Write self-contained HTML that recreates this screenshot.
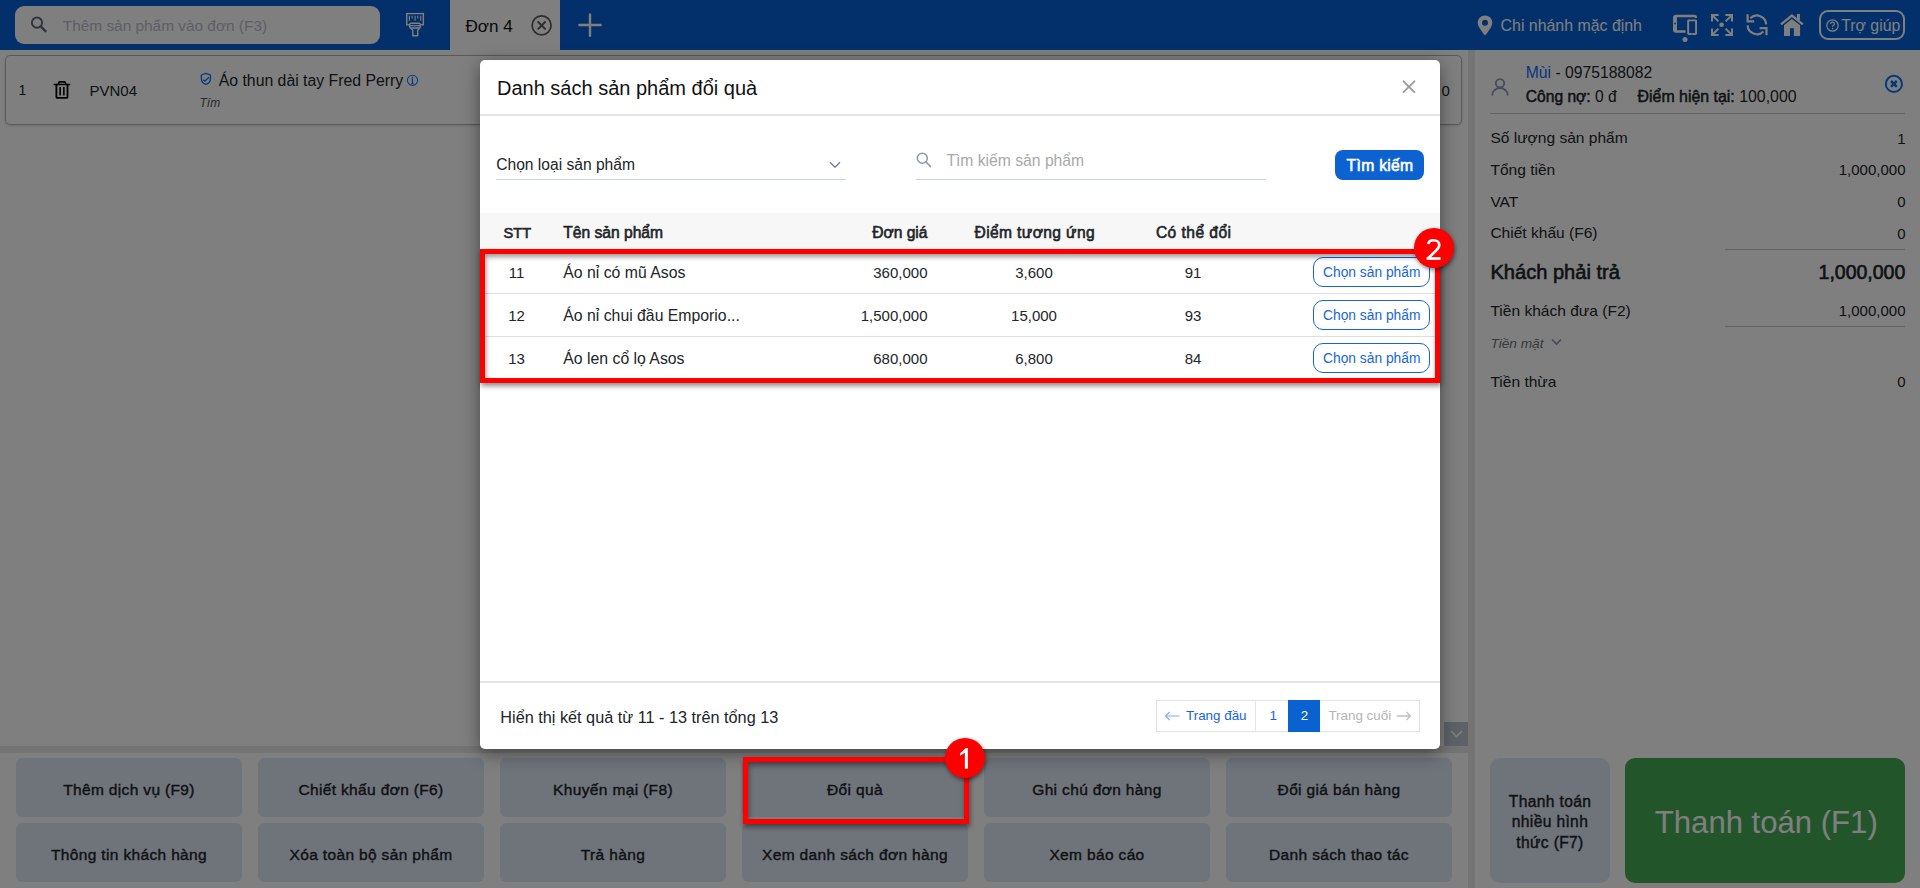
<!DOCTYPE html>
<html><head><meta charset="utf-8">
<style>
*{box-sizing:border-box;margin:0;padding:0}
html,body{width:1920px;height:888px;overflow:hidden;background:#fff;font-family:"Liberation Sans",sans-serif;color:#212529;position:relative}
.abs{position:absolute}
.t{position:absolute;line-height:1;white-space:nowrap}
.box{position:absolute}
.btn{position:absolute;width:226px;height:59px;background:#dfe7f5;border-radius:6px}
.overlay{position:absolute;left:0;top:0;width:1920px;height:888px;background:rgba(0,0,0,.5)}
.modal{position:absolute;left:480px;top:60px;width:960px;height:689px;background:#fff;border-radius:5px;box-shadow:0 4px 18px rgba(0,0,0,.45);overflow:hidden}
.chon{position:absolute;left:833px;width:117px;height:30px;border:1px solid #1565d8;border-radius:10px}
.redbox{position:absolute;border:5px solid #f00;box-shadow:1px 3px 5px rgba(0,0,0,.45),inset 1px 3px 5px rgba(0,0,0,.4)}
.badge{position:absolute;width:40px;height:40px;border-radius:50%;background:#f00;box-shadow:1px 2px 4px rgba(0,0,0,.5)}
</style></head><body>
<div class="box" style="left:0;top:0;width:1920px;height:50px;background:#0660d4"></div>
<div class="box" style="left:15px;top:6px;width:365px;height:38px;background:#fff;border-radius:9px"></div>
<svg class="abs" style="left:30px;top:15px" width="18" height="19" viewBox="0 0 18 19"><circle cx="7" cy="7.65" r="5.1" fill="none" stroke="#5f6b7a" stroke-width="1.9"/><path d="M10.9 11.6L16.2 16.9" stroke="#5f6b7a" stroke-width="2.4"/></svg>
<div class="t" style="top:17.96px;font-size:15.4px;color:#b8c0cc;left:62.80px;">Thêm sản phẩm vào đơn (F3)</div>
<svg class="abs" style="left:405px;top:12px" width="21" height="26" viewBox="0 0 21 26"><rect x="1.74" y="1.6" width="16.6" height="11.2" fill="none" stroke="#fff" stroke-width="1.4"/><path d="M4.4 3.8V8.8M7.1 3.8V6.5M10.05 3.8V8.8M12.75 3.8V6.5M15.7 3.8V8.8" stroke="#fff" stroke-width="1.1"/><rect x="4.66" y="11.27" width="10.54" height="4.68" rx="1.3" fill="#0660d4" stroke="#fff" stroke-width="1.4"/><path d="M4.66 13.7H15.2" stroke="#fff" stroke-width="1.2"/><path d="M5.6 15.95L7.8 18.2V23.8H12.7V18.2L14.9 15.95" fill="none" stroke="#fff" stroke-width="1.4" stroke-linejoin="round"/></svg>
<div class="box" style="left:450px;top:0;width:110px;height:50px;background:#fff"></div>
<div class="t" style="top:17.52px;font-size:17.1px;color:#111;left:465.50px;">Đơn 4</div>
<svg class="abs" style="left:530px;top:14px" width="24" height="24" viewBox="0 0 24 24"><circle cx="11.6" cy="11.4" r="9.45" fill="none" stroke="#5c5c5c" stroke-width="1.8"/><path d="M8.2 8L15.1 14.9M15.1 8L8.2 14.9" stroke="#5c5c5c" stroke-width="2" stroke-linecap="round"/></svg>
<svg class="abs" style="left:578px;top:13px" width="24" height="24" viewBox="0 0 24 24"><path d="M12 1.5V22.7M1.4 12H22.6" stroke="#fff" stroke-width="2.4" stroke-linecap="round"/></svg>
<svg class="abs" style="left:1477px;top:15px" width="16" height="21" viewBox="0 0 16 21"><path d="M8 0.5C3.9 0.5 0.7 3.7 0.7 7.8C0.7 12.5 8 20.5 8 20.5S15.3 12.5 15.3 7.8C15.3 3.7 12.1 0.5 8 0.5Z" fill="#fff"/><circle cx="8" cy="7.8" r="3" fill="#0660d4"/></svg>
<div class="t" style="top:18.04px;font-size:15.9px;color:#fff;left:1500.60px;">Chi nhánh mặc định</div>
<svg class="abs" style="left:1673px;top:14px" width="26" height="29" viewBox="0 0 26 29"><path d="M0 3.7Q0 0.7 3 0.7H21.3Q24 0.7 24 3.5V4H21.8V3.2H4V16.2H12.6V18.7H3Q0 18.7 0 15.7Z" fill="#fff"/><circle cx="2.1" cy="9.5" r="0.9" fill="#0660d4"/><path d="M15.6 5.4H22.6Q24 5.4 24 6.8V19.6Q24 21 22.6 21H15.6Q14.2 21 14.2 19.6V6.8Q14.2 5.4 15.6 5.4ZM16.1 7.3V18.9H22.1V7.3Z" fill="#fff" fill-rule="evenodd"/><circle cx="19.1" cy="20" r="0.6" fill="#0660d4"/><circle cx="12" cy="25.5" r="2.5" fill="#fff"/></svg>
<svg class="abs" style="left:1711px;top:14px" width="22" height="22" viewBox="0 0 22 22"><g stroke="#fff" stroke-width="2" fill="none" stroke-linejoin="miter" stroke-linecap="butt"><path d="M1 7.6V1H7.6M2 2L7.4 7.4"/><path d="M14.4 1H21V7.6M20 2L14.6 7.4"/><path d="M1 14.4V21H7.6M2 20L7.4 14.6"/><path d="M21 14.4V21H14.4M20 20L14.6 14.6"/></g><circle cx="10.6" cy="10.8" r="2.3" fill="#fff"/></svg>
<svg class="abs" style="left:1745px;top:13px" width="24" height="24" viewBox="0 0 24 24"><g stroke="#fff" stroke-width="2.2" fill="none" stroke-linejoin="miter"><path d="M5.32 5.32A9.3 9.3 0 0 1 21.19 11.41"/><path d="M18.48 18.48A9.3 9.3 0 0 1 2.61 12.39"/><path d="M2.6 1.2V8.35H9.2"/><path d="M14.6 15.2H21.5V22.3"/></g></svg>
<svg class="abs" style="left:1780px;top:13px" width="24" height="24" viewBox="0 0 24 24"><path d="M1 11.3L11.9 2.5L22.8 11.3" fill="none" stroke="#fff" stroke-width="2.3"/><rect x="16.9" y="1" width="3" height="6" fill="#fff"/><path d="M4 12.3L11.9 5.9L20.1 12.3V22.9H13.9V15.2H10V22.9H4Z" fill="#fff"/></svg>
<div class="box" style="left:1819px;top:10px;width:86px;height:30px;border:2px solid #fff;border-radius:9px"></div>
<svg class="abs" style="left:1825.5px;top:18.6px" width="13" height="13" viewBox="0 0 13 13"><circle cx="6.5" cy="6.5" r="5.7" fill="none" stroke="#fff" stroke-width="1.2"/><path d="M4.6 5C4.6 3.9 5.4 3.2 6.5 3.2S8.4 3.9 8.4 4.9C8.4 6.2 6.6 6.3 6.6 7.7" fill="none" stroke="#fff" stroke-width="1.2"/><circle cx="6.6" cy="9.6" r=".8" fill="#fff"/></svg>
<div class="t" style="top:17.53px;font-size:15.8px;color:#fff;left:1841.30px;">Trợ giúp</div>
<div class="box" style="left:1468px;top:50px;width:7px;height:838px;background:#e9e9e9"></div>
<div class="box" style="left:0;top:746px;width:1468px;height:7px;background:#e9e9e9"></div>
<div class="box" style="left:5px;top:55px;width:1457px;height:70px;border:1px solid #b4b4b4;border-radius:5px;background:#fff;box-shadow:0 1px 3px rgba(0,0,0,.15)"></div>
<div class="t" style="top:83.15px;font-size:14px;color:#212529;left:18.50px;">1</div>
<svg class="abs" style="left:53px;top:80px" width="18" height="20" viewBox="0 0 18 20"><path d="M1.4 4.5H16.5" stroke="#000" stroke-width="1.7" stroke-linecap="round"/><path d="M5.1 4.4L6.3 1.9H11.8L13 4.4" fill="none" stroke="#000" stroke-width="1.6" stroke-linejoin="round"/><path d="M3.4 4.5V16.9Q3.4 17.95 4.5 17.95H13.4Q14.5 17.95 14.5 16.9V4.5" fill="none" stroke="#000" stroke-width="1.8"/><path d="M7.15 7.1V15.6M10.85 7.1V15.6" stroke="#000" stroke-width="1.6"/></svg>
<div class="t" style="top:83.05px;font-size:15px;color:#212529;left:89.50px;">PVN04</div>
<svg class="abs" style="left:200px;top:72px" width="12" height="14" viewBox="0 0 12 14"><path d="M5.9 1.35L10.45 3V6.8C10.45 9.6 8.4 11.6 5.9 12.45C3.4 11.6 1.35 9.6 1.35 6.8V3Z" fill="none" stroke="#0d6efd" stroke-width="1.3" stroke-linejoin="round"/><path d="M3.2 7.65L4.9 9.1L8.9 5.2" fill="none" stroke="#0d6efd" stroke-width="1.25"/></svg>
<div class="t" style="top:72.63px;font-size:15.8px;color:#212529;left:218.75px;">Áo thun dài tay Fred Perry</div>
<svg class="abs" style="left:406px;top:74px" width="13" height="13" viewBox="0 0 13 13"><circle cx="6.5" cy="6.36" r="5.1" fill="none" stroke="#0d6efd" stroke-width="1.05"/><circle cx="6.5" cy="3.6" r=".8" fill="#0d6efd"/><path d="M6.5 5V9.7M5.1 9.75H7.9M5.6 5.1H6.6" fill="none" stroke="#0d6efd" stroke-width="1.15"/></svg>
<div class="t" style="top:96.84px;font-size:12px;color:#555;font-style:italic;left:199.50px;">Tím</div>
<div class="t" style="top:83.00px;font-size:15px;color:#212529;left:1441.50px;">0</div>
<svg class="abs" style="left:1491px;top:78px" width="18" height="18" viewBox="0 0 18 18"><circle cx="9" cy="5.3" r="4.2" fill="none" stroke="#8e9ab0" stroke-width="1.9"/><path d="M1.2 17.6C1.2 12.9 4.7 10.1 9 10.1S16.8 12.9 16.8 17.6" fill="none" stroke="#8e9ab0" stroke-width="1.9"/></svg>
<div class="t" style="top:65.21px;font-size:15.7px;color:#212529;left:1525.80px;"><span style="color:#0d6efd">Mùi</span> - 0975188082</div>
<div class="t" style="top:89.19px;font-size:15.6px;color:#212529;left:1525.80px;"><span style="-webkit-text-stroke-width:.5px">Công nợ:</span> 0 đ</div>
<div class="t" style="top:88.94px;font-size:15.9px;color:#212529;left:1637.60px;"><span style="-webkit-text-stroke-width:.5px">Điểm hiện tại:</span> 100,000</div>
<svg class="abs" style="left:1884px;top:74px" width="20" height="20" viewBox="0 0 20 20"><circle cx="9.9" cy="9.9" r="8.1" fill="none" stroke="#0a70f5" stroke-width="2"/><path d="M7 7L12.8 12.8M12.8 7L7 12.8" stroke="#0a70f5" stroke-width="2.5"/></svg>
<div class="box" style="left:1490px;top:113px;width:415px;height:1px;background:#c2c6cc"></div>
<div class="t" style="top:130.44px;font-size:15.55px;color:#212529;left:1490.40px;">Số lượng sản phẩm</div>
<div class="t" style="top:130.90px;font-size:15.0px;color:#212529;right:14.50px;">1</div>
<div class="t" style="top:161.74px;font-size:15.55px;color:#212529;left:1490.40px;">Tổng tiền</div>
<div class="t" style="top:162.20px;font-size:15.0px;color:#212529;right:14.50px;">1,000,000</div>
<div class="t" style="top:193.84px;font-size:15.55px;color:#212529;left:1490.40px;">VAT</div>
<div class="t" style="top:194.30px;font-size:15.0px;color:#212529;right:14.50px;">0</div>
<div class="t" style="top:225.34px;font-size:15.55px;color:#212529;left:1490.40px;">Chiết khấu (F6)</div>
<div class="t" style="top:225.80px;font-size:15.0px;color:#212529;right:14.50px;">0</div>
<div class="t" style="top:302.74px;font-size:15.55px;color:#212529;left:1490.40px;">Tiền khách đưa (F2)</div>
<div class="t" style="top:303.20px;font-size:15.0px;color:#212529;right:14.50px;">1,000,000</div>
<div class="t" style="top:373.64px;font-size:15.55px;color:#212529;left:1490.40px;">Tiền thừa</div>
<div class="t" style="top:374.10px;font-size:15.0px;color:#212529;right:14.50px;">0</div>
<div class="box" style="left:1725px;top:249px;width:180px;height:1px;background:#c2c6cc"></div>
<div class="t" style="top:262.29px;font-size:20.1px;color:#212529;-webkit-text-stroke-width:0.6px;left:1490.40px;">Khách phải trả</div>
<div class="t" style="top:262.79px;font-size:19.5px;color:#212529;-webkit-text-stroke-width:0.6px;right:14.70px;">1,000,000</div>
<div class="box" style="left:1725px;top:326px;width:180px;height:1px;background:#c2c6cc"></div>
<div class="t" style="top:337.40px;font-size:13.7px;color:#6c757d;font-style:italic;left:1490.40px;">Tiền mặt</div>
<svg class="abs" style="left:1551px;top:338px" width="11" height="8" viewBox="0 0 11 8"><path d="M1 1.5L5.5 6L10 1.5" fill="none" stroke="#8a96aa" stroke-width="1.6"/></svg>
<div class="box" style="left:1444px;top:722px;width:24px;height:24px;background:#bcc4ce"></div>
<svg class="abs" style="left:1449.5px;top:730px" width="13" height="8" viewBox="0 0 13 8"><path d="M1 1L6.5 6.5L12 1" fill="none" stroke="#fff" stroke-width="1.6"/></svg>
<div class="btn" style="left:16px;top:758px"></div>
<div class="t" style="top:781.98px;font-size:15.5px;color:#212529;-webkit-text-stroke-width:0.4px;letter-spacing:0.35px;left:-171.00px;width:600px;text-align:center;">Thêm dịch vụ (F9)</div>
<div class="btn" style="left:258px;top:758px"></div>
<div class="t" style="top:781.98px;font-size:15.5px;color:#212529;-webkit-text-stroke-width:0.4px;letter-spacing:0.35px;left:71.00px;width:600px;text-align:center;">Chiết khấu đơn (F6)</div>
<div class="btn" style="left:500px;top:758px"></div>
<div class="t" style="top:781.98px;font-size:15.5px;color:#212529;-webkit-text-stroke-width:0.4px;letter-spacing:0.35px;left:313.00px;width:600px;text-align:center;">Khuyến mại (F8)</div>
<div class="btn" style="left:742px;top:758px"></div>
<div class="t" style="top:781.98px;font-size:15.5px;color:#212529;-webkit-text-stroke-width:0.4px;letter-spacing:0.35px;left:555.00px;width:600px;text-align:center;">Đổi quà</div>
<div class="btn" style="left:984px;top:758px"></div>
<div class="t" style="top:781.98px;font-size:15.5px;color:#212529;-webkit-text-stroke-width:0.4px;letter-spacing:0.35px;left:797.00px;width:600px;text-align:center;">Ghi chú đơn hàng</div>
<div class="btn" style="left:1226px;top:758px"></div>
<div class="t" style="top:781.98px;font-size:15.5px;color:#212529;-webkit-text-stroke-width:0.4px;letter-spacing:0.35px;left:1039.00px;width:600px;text-align:center;">Đổi giá bán hàng</div>
<div class="btn" style="left:16px;top:823px"></div>
<div class="t" style="top:847.28px;font-size:15.5px;color:#212529;-webkit-text-stroke-width:0.4px;letter-spacing:0.35px;left:-171.00px;width:600px;text-align:center;">Thông tin khách hàng</div>
<div class="btn" style="left:258px;top:823px"></div>
<div class="t" style="top:847.28px;font-size:15.5px;color:#212529;-webkit-text-stroke-width:0.4px;letter-spacing:0.35px;left:71.00px;width:600px;text-align:center;">Xóa toàn bộ sản phẩm</div>
<div class="btn" style="left:500px;top:823px"></div>
<div class="t" style="top:847.28px;font-size:15.5px;color:#212529;-webkit-text-stroke-width:0.4px;letter-spacing:0.35px;left:313.00px;width:600px;text-align:center;">Trả hàng</div>
<div class="btn" style="left:742px;top:823px"></div>
<div class="t" style="top:847.28px;font-size:15.5px;color:#212529;-webkit-text-stroke-width:0.4px;letter-spacing:0.35px;left:555.00px;width:600px;text-align:center;">Xem danh sách đơn hàng</div>
<div class="btn" style="left:984px;top:823px"></div>
<div class="t" style="top:847.28px;font-size:15.5px;color:#212529;-webkit-text-stroke-width:0.4px;letter-spacing:0.35px;left:797.00px;width:600px;text-align:center;">Xem báo cáo</div>
<div class="btn" style="left:1226px;top:823px"></div>
<div class="t" style="top:847.28px;font-size:15.5px;color:#212529;-webkit-text-stroke-width:0.4px;letter-spacing:0.35px;left:1039.00px;width:600px;text-align:center;">Danh sách thao tác</div>
<div class="box" style="left:1490px;top:758px;width:120px;height:125px;background:#dfe7f5;border-radius:10px"></div>
<div class="t" style="top:793.69px;font-size:15.6px;color:#212529;-webkit-text-stroke-width:0.4px;letter-spacing:0.35px;left:1250.00px;width:600px;text-align:center;">Thanh toán</div>
<div class="t" style="top:814.29px;font-size:15.6px;color:#212529;-webkit-text-stroke-width:0.4px;letter-spacing:0.35px;left:1250.00px;width:600px;text-align:center;">nhiều hình</div>
<div class="t" style="top:834.79px;font-size:15.6px;color:#212529;-webkit-text-stroke-width:0.4px;letter-spacing:0.35px;left:1250.00px;width:600px;text-align:center;">thức (F7)</div>
<div class="box" style="left:1625px;top:758px;width:280px;height:125px;background:#46aa54;border-radius:10px"></div>
<div class="t" style="top:806.97px;font-size:31.1px;color:#fff;left:1654.80px;">Thanh toán (F1)</div>
<div class="overlay"></div>
<div class="modal">
<div class="t" style="top:17.67px;font-size:20px;color:#111;left:17.00px;">Danh sách sản phẩm đổi quà</div>
<div class="box" style="left:0;top:54px;width:960px;height:2px;background:#e4e4e4"></div>
<svg class="abs" style="left:922px;top:20px" width="14" height="14" viewBox="0 0 14 14"><path d="M1.5 1.3L12.4 12.2M12.4 1.3L1.5 12.2" stroke="#9c9c9c" stroke-width="1.9" stroke-linecap="round"/></svg>
<div class="t" style="top:96.79px;font-size:15.6px;color:#212529;left:16.25px;">Chọn loại sản phẩm</div>
<svg class="abs" style="left:349px;top:101px" width="12" height="8" viewBox="0 0 12 8"><path d="M1 1.2L6 6.2L11 1.2" fill="none" stroke="#7484a0" stroke-width="1.5"/></svg>
<div class="box" style="left:16px;top:119px;width:350px;height:1px;background:#c9d1dd"></div>
<svg class="abs" style="left:436px;top:92px" width="16" height="16" viewBox="0 0 16 16"><circle cx="6.3" cy="6.3" r="5" fill="none" stroke="#8a96aa" stroke-width="1.5"/><path d="M10 10L15 15" stroke="#8a96aa" stroke-width="1.6"/></svg>
<div class="t" style="top:93.21px;font-size:15.7px;color:#a9a9a9;left:466.40px;">Tìm kiếm sản phẩm</div>
<div class="box" style="left:436px;top:119px;width:350px;height:1px;background:#c9d1dd"></div>
<div class="box" style="left:855px;top:90px;width:89px;height:30px;background:#0d62d1;border-radius:8px"></div>
<div class="t" style="top:98.01px;font-size:15.7px;color:#fff;-webkit-text-stroke-width:0.6px;left:866.60px;letter-spacing:0.3px;">Tìm kiếm</div>
<div class="box" style="left:0;top:153px;width:960px;height:36px;background:#f7f7f7"></div>
<div class="t" style="top:165.54px;font-size:14.6px;color:#212529;-webkit-text-stroke-width:0.6px;left:23.50px;">STT</div>
<div class="t" style="top:164.69px;font-size:15.6px;color:#212529;-webkit-text-stroke-width:0.6px;left:83.30px;">Tên sản phẩm</div>
<div class="t" style="top:164.69px;font-size:15.6px;color:#212529;-webkit-text-stroke-width:0.6px;right:512.50px;">Đơn giá</div>
<div class="t" style="top:164.69px;font-size:15.6px;color:#212529;-webkit-text-stroke-width:0.6px;left:494.50px;letter-spacing:0.38px;">Điểm tương ứng</div>
<div class="t" style="top:164.69px;font-size:15.6px;color:#212529;-webkit-text-stroke-width:0.6px;left:675.90px;letter-spacing:0.45px;">Có thể đổi</div>
<div class="t" style="top:205.30px;font-size:15px;color:#212529;left:-263.50px;width:600px;text-align:center;">11</div>
<div class="t" style="top:205.43px;font-size:15.8px;color:#212529;left:83.30px;">Áo nỉ có mũ Asos</div>
<div class="t" style="top:205.10px;font-size:15px;color:#212529;right:512.50px;">360,000</div>
<div class="t" style="top:205.10px;font-size:15px;color:#212529;left:254.00px;width:600px;text-align:center;">3,600</div>
<div class="t" style="top:205.10px;font-size:15px;color:#212529;left:413.00px;width:600px;text-align:center;">91</div>
<div class="chon" style="top:197px"></div>
<div class="t" style="top:206.12px;font-size:13.8px;color:#1565d8;left:843.00px;">Chọn sản phẩm</div>
<div class="box" style="left:0;top:233px;width:960px;height:1px;background:#dedede"></div>
<div class="t" style="top:248.30px;font-size:15px;color:#212529;left:-263.50px;width:600px;text-align:center;">12</div>
<div class="t" style="top:248.43px;font-size:15.8px;color:#212529;left:83.30px;">Áo nỉ chui đầu Emporio...</div>
<div class="t" style="top:248.10px;font-size:15px;color:#212529;right:512.50px;">1,500,000</div>
<div class="t" style="top:248.10px;font-size:15px;color:#212529;left:254.00px;width:600px;text-align:center;">15,000</div>
<div class="t" style="top:248.10px;font-size:15px;color:#212529;left:413.00px;width:600px;text-align:center;">93</div>
<div class="chon" style="top:240px"></div>
<div class="t" style="top:249.12px;font-size:13.8px;color:#1565d8;left:843.00px;">Chọn sản phẩm</div>
<div class="box" style="left:0;top:276px;width:960px;height:1px;background:#dedede"></div>
<div class="t" style="top:291.30px;font-size:15px;color:#212529;left:-263.50px;width:600px;text-align:center;">13</div>
<div class="t" style="top:291.43px;font-size:15.8px;color:#212529;left:83.30px;">Áo len cổ lọ Asos</div>
<div class="t" style="top:291.10px;font-size:15px;color:#212529;right:512.50px;">680,000</div>
<div class="t" style="top:291.10px;font-size:15px;color:#212529;left:254.00px;width:600px;text-align:center;">6,800</div>
<div class="t" style="top:291.10px;font-size:15px;color:#212529;left:413.00px;width:600px;text-align:center;">84</div>
<div class="chon" style="top:283px"></div>
<div class="t" style="top:292.12px;font-size:13.8px;color:#1565d8;left:843.00px;">Chọn sản phẩm</div>
<div class="box" style="left:0;top:621px;width:960px;height:2px;background:#e4e4e4"></div>
<div class="t" style="top:649.24px;font-size:16.25px;color:#212529;left:20.30px;">Hiển thị kết quả từ 11 - 13 trên tổng 13</div>
<div class="box" style="left:676px;top:640px;width:264px;height:32px;border:1px solid #dee2e6;background:#fff"></div>
<div class="box" style="left:775px;top:641px;width:1px;height:30px;background:#dee2e6"></div>
<div class="box" style="left:808px;top:640px;width:32px;height:32px;background:#0a62d0"></div>
<svg class="abs" style="left:684px;top:651px" width="16" height="10" viewBox="0 0 16 10"><path d="M15.5 5H1.5M5.5 1L1.5 5L5.5 9" fill="none" stroke="#7fb0ee" stroke-width="1.2"/></svg>
<div class="t" style="top:648.96px;font-size:13.4px;color:#1565d8;left:706.00px;">Trang đầu</div>
<div class="t" style="top:648.96px;font-size:13.4px;color:#1565d8;left:789.40px;">1</div>
<div class="t" style="top:648.96px;font-size:13.4px;color:#fff;left:820.70px;">2</div>
<div class="t" style="top:648.96px;font-size:13.4px;color:#b5b5b5;left:848.40px;">Trang cuối</div>
<svg class="abs" style="left:916px;top:651px" width="16" height="10" viewBox="0 0 16 10"><path d="M0.5 5H14.5M10.5 1L14.5 5L10.5 9" fill="none" stroke="#c0c0c0" stroke-width="1.3"/></svg>
</div>
<div class="redbox" style="left:480px;top:249px;width:960px;height:134px"></div>
<div class="badge" style="left:1414px;top:228px"></div>
<svg class="abs" style="left:1419px;top:233px" width="30" height="30" viewBox="0 0 30 30"><path d="M9.3 11.2C9.5 8.6 11.6 7.25 14.4 7.25C17.9 7.25 20.3 9.2 20.3 12C20.3 14.2 19 15.6 17 17.6L8.6 25.8" fill="none" stroke="#fff" stroke-width="2.7"/><rect x="7.6" y="24.15" width="14" height="2.7" fill="#fff"/></svg>
<div class="redbox" style="left:743px;top:757px;width:226px;height:67px"></div>
<div class="badge" style="left:945px;top:738px"></div>
<svg class="abs" style="left:950px;top:743px" width="30" height="30" viewBox="0 0 30 30"><path d="M15.9 5.07H17.9V25.84H14.86V9.8L9.97 12.8V10.5Z" fill="#fff"/></svg>
</body></html>
